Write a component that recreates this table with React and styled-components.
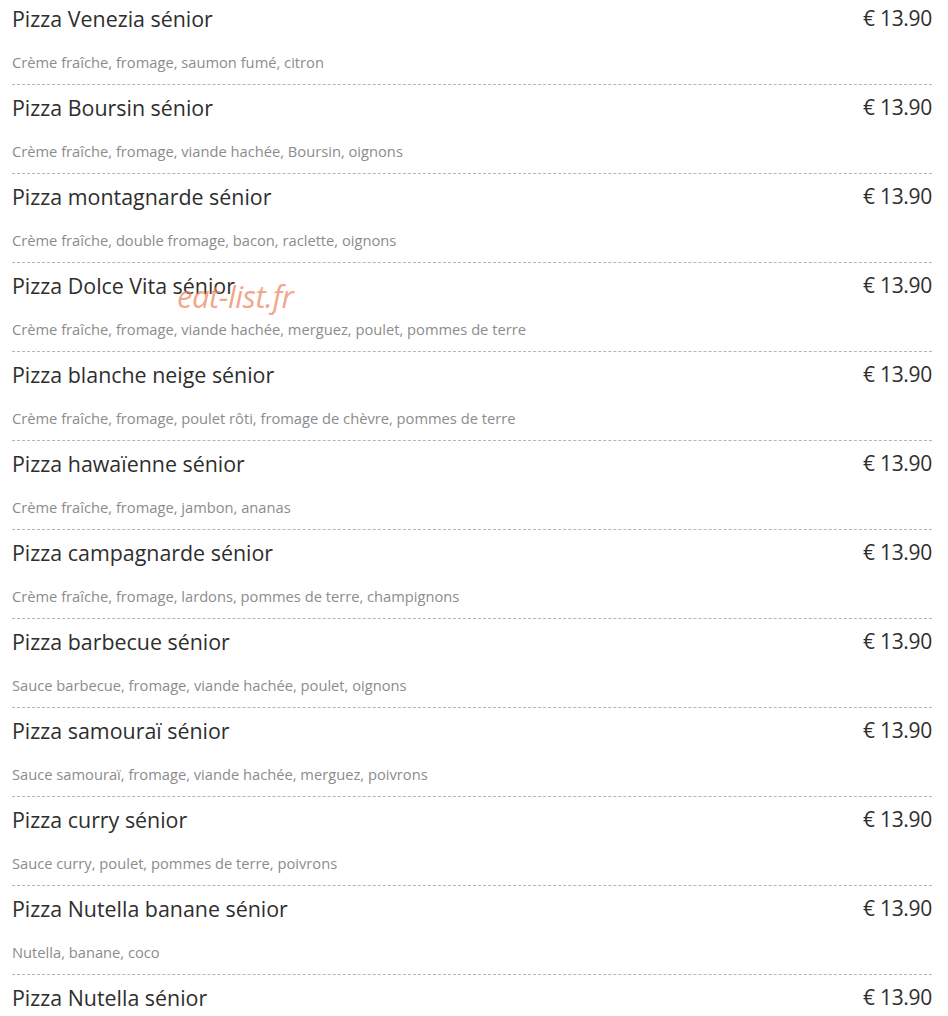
import React from "react";
import styled, { createGlobalStyle } from "styled-components";

const GlobalStyle = createGlobalStyle`
  body {
    margin: 0;
    background: #fff;
    font-family: "Open Sans", "Liberation Sans", sans-serif;
  }
`;

const Page = styled.div`
  position: relative;
  width: 920px;
  padding-left: 12px;
`;

const Item = styled.div`
  padding: 8px 0 12px;
  border-bottom: 1px dashed #b5b5b5;
  &:first-child {
    padding-top: 4px;
  }
`;

const TitleRow = styled.div`
  display: flex;
  justify-content: space-between;
  align-items: center;
  height: 28px;
  font-size: 21.4px;
  color: #2e2e2e;
`;

const Price = styled.span`
  font-size: 21px;
  letter-spacing: -0.3px;
`;

const Desc = styled.div`
  margin-top: 20px;
  height: 20px;
  line-height: 20px;
  font-size: 14.7px;
  color: #8c8c8c;
`;

const Watermark = styled.div`
  position: absolute;
  left: 177px;
  top: 275px;
  font-size: 31px;
  font-style: italic;
  color: rgba(236, 128, 88, 0.7);
  letter-spacing: -0.5px;
  pointer-events: none;
`;

const items = [
  ["Pizza Venezia sénior", "Crème fraîche, fromage, saumon fumé, citron"],
  ["Pizza Boursin sénior", "Crème fraîche, fromage, viande hachée, Boursin, oignons"],
  ["Pizza montagnarde sénior", "Crème fraîche, double fromage, bacon, raclette, oignons"],
  ["Pizza Dolce Vita sénior", "Crème fraîche, fromage, viande hachée, merguez, poulet, pommes de terre"],
  ["Pizza blanche neige sénior", "Crème fraîche, fromage, poulet rôti, fromage de chèvre, pommes de terre"],
  ["Pizza hawaïenne sénior", "Crème fraîche, fromage, jambon, ananas"],
  ["Pizza campagnarde sénior", "Crème fraîche, fromage, lardons, pommes de terre, champignons"],
  ["Pizza barbecue sénior", "Sauce barbecue, fromage, viande hachée, poulet, oignons"],
  ["Pizza samouraï sénior", "Sauce samouraï, fromage, viande hachée, merguez, poivrons"],
  ["Pizza curry sénior", "Sauce curry, poulet, pommes de terre, poivrons"],
  ["Pizza Nutella banane sénior", "Nutella, banane, coco"],
  ["Pizza Nutella sénior", ""],
];

export default function App() {
  return (
    <>
      <GlobalStyle />
      <Page>
        {items.map(([name, desc]) => (
          <Item key={name}>
            <TitleRow>
              <span>{name}</span>
              <Price>€ 13.90</Price>
            </TitleRow>
            <Desc>{desc}</Desc>
          </Item>
        ))}
        <Watermark>eat-list.fr</Watermark>
      </Page>
    </>
  );
}
